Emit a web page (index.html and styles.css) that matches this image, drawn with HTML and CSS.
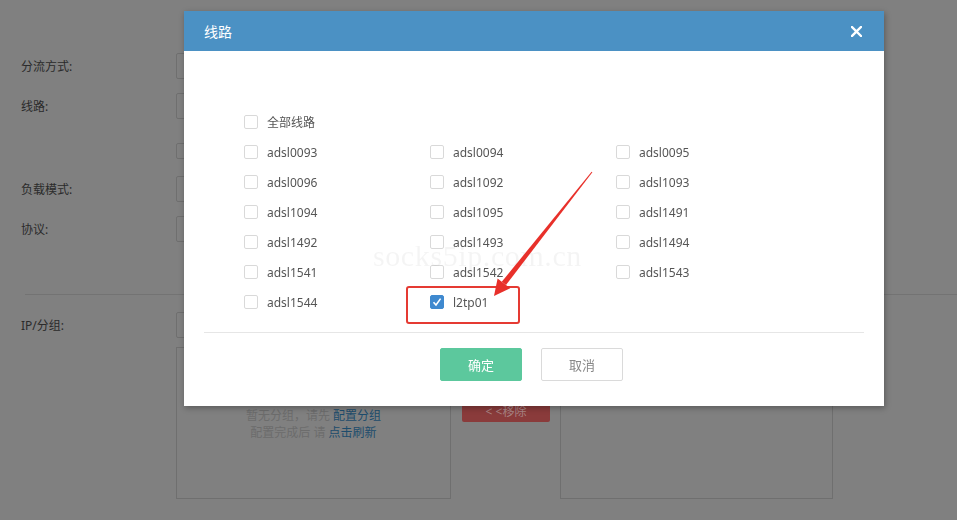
FILE: index.html
```html
<!DOCTYPE html>
<html lang="zh-CN">
<head>
  <meta charset="UTF-8" />
  <title>线路</title>
  <link rel="stylesheet" href="styles.css">
</head>
<body>
  <!-- page behind the dialog (already dimmed) -->
  <div class="page">
    <div class="row r1">
      <label class="lbl">分流方式:</label>
      <div class="field"></div>
    </div>
    <div class="row r2">
      <label class="lbl">线路:</label>
      <div class="field"></div>
    </div>
    <div class="row r3">
      <span class="lbl"></span>
      <span class="mini-box"></span>
    </div>
    <div class="row r4">
      <label class="lbl">负载模式:</label>
      <div class="field"></div>
    </div>
    <div class="row r5">
      <label class="lbl">协议:</label>
      <div class="field"></div>
    </div>
    <hr class="sep">
    <div class="row r6">
      <label class="lbl">IP/分组:</label>
      <div class="field"></div>
    </div>
    <div class="row r7">
      <span class="lbl"></span>
      <div class="group-box">
        <p>暂无分组，请先 <a>配置分组</a></p>
        <p>配置完成后 请 <a>点击刷新</a></p>
      </div>
      <div class="mid-btns">
        <div class="btn-remove">&lt; &lt;移除</div>
      </div>
      <div class="group-box right"></div>
    </div>
  </div>

  <!-- dialog -->
  <div class="modal">
    <div class="modal-head">
      <span class="modal-title">线路</span>
      <span class="modal-close">
        <svg width="11" height="11" viewBox="0 0 11 11"><path d="M1 1L10 10M10 1L1 10" stroke="#fff" stroke-width="2.4" stroke-linecap="square"/></svg>
      </span>
    </div>
    <div class="modal-body">
      <div class="ck-all">
        <label class="ck"><span class="box"></span>全部线路</label>
      </div>
      <div class="ck-grid">
        <label class="ck"><span class="box"></span>adsl0093</label>
        <label class="ck"><span class="box"></span>adsl0094</label>
        <label class="ck"><span class="box"></span>adsl0095</label>
        <label class="ck"><span class="box"></span>adsl0096</label>
        <label class="ck"><span class="box"></span>adsl1092</label>
        <label class="ck"><span class="box"></span>adsl1093</label>
        <label class="ck"><span class="box"></span>adsl1094</label>
        <label class="ck"><span class="box"></span>adsl1095</label>
        <label class="ck"><span class="box"></span>adsl1491</label>
        <label class="ck"><span class="box"></span>adsl1492</label>
        <label class="ck"><span class="box"></span>adsl1493</label>
        <label class="ck"><span class="box"></span>adsl1494</label>
        <label class="ck"><span class="box"></span>adsl1541</label>
        <label class="ck"><span class="box"></span>adsl1542</label>
        <label class="ck"><span class="box"></span>adsl1543</label>
        <label class="ck"><span class="box"></span>adsl1544</label>
        <label class="ck"><span class="box checked"><svg width="10" height="10" viewBox="0 0 10 10"><path d="M1.5 5.2L4 8L8.6 1.6" fill="none" stroke="#fff" stroke-width="1.6"/></svg></span>l2tp01</label>
      </div>
      <div class="watermark">socks5ip.com.cn</div>
    </div>
    <div class="modal-foot">
      <button class="btn btn-ok">确定</button>
      <button class="btn btn-cancel">取消</button>
    </div>

    <!-- annotation: red frame + arrow -->
    <div class="mark-box"></div>
    <svg class="mark-arrow" width="700" height="395" viewBox="0 0 700 395">
      <polygon points="408.4,161.3 407.6,160.7 317.8,270.8 322,274" fill="#e8302a"/>
      <polygon points="310,285 326.2,277.3 313.6,267.5" fill="#e8302a"/>
    </svg>
  </div>
</body>
</html>
```

FILE: styles.css
```css
html, body {
  margin: 0;
  height: 100%;
}
body {
  background: #808080;
  font-family: "Noto Sans", "Noto Sans CJK SC", sans-serif;
  font-size: 12px;
  color: #2b2b2b;
  overflow: hidden;
}
.page {
  padding: 53px 0 0 21px;
}
.row {
  display: flex;
  align-items: center;
}
.lbl {
  width: 155px;
  flex: none;
  color: #2b2b2b;
}
.field {
  width: 500px;
  height: 24px;
  border: 1px solid #6f6f6f;
  border-radius: 2px;
}
.r2 { margin-top: 14px; }
.r3 { margin-top: 24px; }
.r4 { margin-top: 17px; }
.r5 { margin-top: 14px; }
.r6 { margin-top: 0; }
.r7 {
  margin-top: 9px;
  align-items: flex-start;
}
.mini-box {
  width: 14px;
  height: 14px;
  border: 1px solid #6f6f6f;
  border-radius: 2px;
}
.sep {
  border: 0;
  border-top: 1px solid #737373;
  margin: 52px 0 17px 4px;
}
.group-box {
  width: 275px;
  height: 152px;
  border: 1px solid #6f6f6f;
  text-align: center;
  color: #6c6c6c;
  padding-top: 59px;
  box-sizing: border-box;
}
.group-box p {
  margin: 0;
  line-height: 17px;
}
.group-box a {
  color: #1d4c6c;
}
.group-box.right {
  width: 273px;
}
.mid-btns {
  width: 88px;
  margin: 55px 10px 0 11px;
}
.btn-remove {
  height: 20px;
  line-height: 19px;
  background: #8a3b3b;
  color: #a98585;
  border-radius: 2px;
  text-align: center;
  font-size: 12px;
}

/* dialog */
.modal {
  position: fixed;
  left: 184px;
  top: 11px;
  width: 700px;
  background: #fff;
  box-shadow: 1px 2px 6px rgba(0, 0, 0, 0.3);
}
.modal-head {
  height: 40px;
  background: #4b91c4;
  display: flex;
  align-items: center;
  justify-content: space-between;
  padding: 0 22px 0 20px;
}
.modal-title {
  color: #fff;
  font-size: 14px;
}
.modal-close {
  display: flex;
  cursor: pointer;
}
.modal-body {
  position: relative;
  padding: 56px 20px 15px 60px;
}
.ck-grid {
  display: grid;
  grid-template-columns: repeat(3, 186px);
}
.ck {
  height: 30px;
  display: flex;
  align-items: center;
  color: #555;
  font-size: 12px;
}
.box {
  width: 12px;
  height: 12px;
  border: 1px solid #d9d9d9;
  border-radius: 2px;
  margin-right: 9px;
  display: flex;
  align-items: center;
  justify-content: center;
  flex: none;
}
.box.checked {
  background: #3f89cf;
  border-color: #3f89cf;
}
.watermark {
  position: absolute;
  left: 189px;
  top: 188px;
  font-family: "Liberation Serif", serif;
  font-size: 30px;
  letter-spacing: 0.6px;
  color: rgba(0, 0, 0, 0.045);
}
.modal-foot {
  margin: 0 20px;
  border-top: 1px solid #e6e6e6;
  padding: 15px 0 25px;
  display: flex;
  justify-content: center;
  gap: 19px;
  padding-right: 5px;
}
.btn {
  width: 82px;
  height: 33px;
  border-radius: 2px;
  font-family: inherit;
  font-size: 13px;
  cursor: pointer;
}
.btn-ok {
  background: #5cc89d;
  border: 1px solid #5cc89d;
  color: #fff;
}
.btn-cancel {
  background: #fff;
  border: 1px solid #dadada;
  color: #888;
}
.mark-box {
  position: absolute;
  left: 222px;
  top: 275px;
  width: 110px;
  height: 34px;
  border: 2px solid #e53a33;
  border-radius: 3px;
}
.mark-arrow {
  position: absolute;
  left: 0;
  top: 0;
  pointer-events: none;
}
```
